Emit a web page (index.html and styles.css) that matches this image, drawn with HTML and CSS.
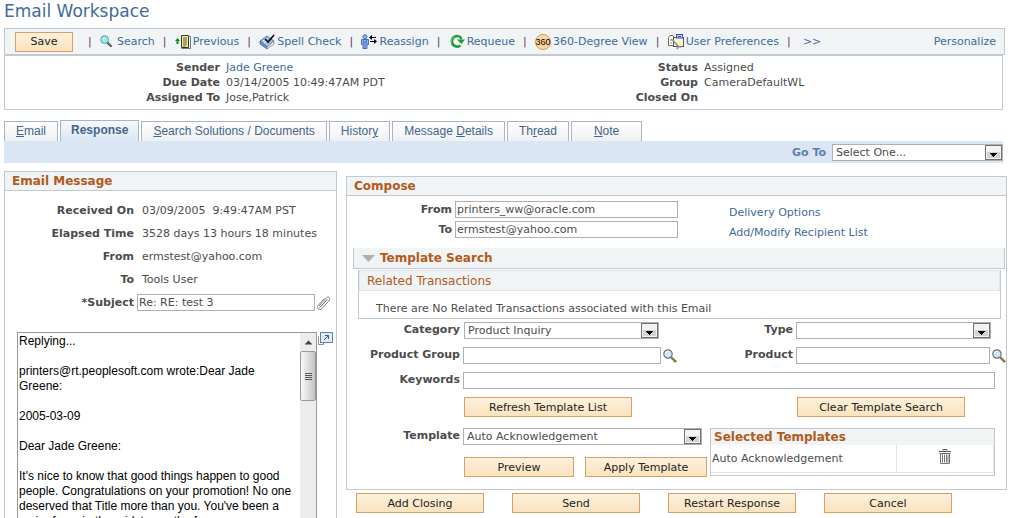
FILE: index.html
```html
<!DOCTYPE html>
<html lang="en">
<head>
<meta charset="utf-8">
<title>Email Workspace</title>
<link rel="stylesheet" href="styles.css">
</head>
<body>
<svg class="defs" aria-hidden="true">
  <symbol id="lens" viewBox="0 0 14 14">
    <path d="M8 8l5 5" stroke="#6b6a1c" stroke-width="2.4"/>
    <path d="M8.500 8l4 4" stroke="#b9b45a" stroke-width=".8"/>
    <circle cx="5" cy="5" r="4.200" fill="#cfe6fb" stroke="#6d7480" stroke-width="1.200"/>
    <path d="M2.500 5a2.500 2.500 0 0 1 2.500-2.500" stroke="#fff" stroke-width="1.200" fill="none"/>
  </symbol>
  <symbol id="drop" viewBox="0 0 17 16">
    <rect x=".5" y=".5" width="16" height="14" fill="#f3f3f3" stroke="#707070"/>
    <rect x="2" y="7" width="13" height="6" fill="#d2d2d2"/>
    <path d="M5 8h7v1h-1v1h-1v1h-1v1h-1v-1h-1v-1h-1v-1h-1z" fill="#000"/>
  </symbol>
</svg>
<div class="page">
  <h1 class="title">Email Workspace</h1>

  <nav class="toolbar">
    <button class="btn save">Save</button>
    <span class="sep">|</span>
    <a class="tool search" href="#"><svg class="icon-s" viewBox="0 0 14 14"><path d="M8 8l4.500 4.500" stroke="#333" stroke-width="2.200"/><path d="M8.500 8l4 4" stroke="#b9c85a" stroke-width=".8"/><circle cx="5" cy="5" r="4.200" fill="#8ff0f4" stroke="#6b8a92"/><path d="M3 5a2 2 0 0 1 2-2" stroke="#fff" fill="none"/></svg>Search</a>
    <span class="sep">|</span>
    <a class="tool" href="#"><svg class="icon" viewBox="0 0 16 16"><path d="M2.500 4l2.500 3H3.500v3h-2V7H0z" fill="#138a1e"/><path d="M6.500 1.500h7v12h-7z" fill="#f6f08a" stroke="#333"/><path d="M13.500 2.500h2v12h-9" fill="none" stroke="#777"/><path d="M8 4h4M8 6h4M8 8h4M8 10h4M8 12h3" stroke="#555"/></svg>Previous</a>
    <span class="sep">|</span>
    <a class="tool" href="#"><svg class="icon" viewBox="0 0 16 16"><path d="M1 7l7-5 7 5-7 6z" fill="#9dbce6" stroke="#3c5f92" stroke-width=".8"/><path d="M1 7v3l7 5v-2z" fill="#6f95cc" stroke="#3c5f92" stroke-width=".7"/><path d="M8 13v2l7-5V7z" fill="#f4f4ef" stroke="#777" stroke-width=".7"/><path d="M4 7l3-2M5 9l3-2" stroke="#fff"/><path d="M6 5l3 3 6-7" fill="none" stroke="#000" stroke-width="1.600"/></svg>Spell Check</a>
    <span class="sep">|</span>
    <a class="tool" href="#"><svg class="icon" viewBox="0 0 16 16"><circle cx="4" cy="2.700" r="2" fill="#8cb4f2" stroke="#456fc0"/><path d="M.5 5.500h7v5h-1.500V14.500h-4V10.500H.5z" fill="#8cb4f2" stroke="#456fc0"/><path d="M4 7v7M2.500 6v4M5.500 6v4" stroke="#456fc0" stroke-width=".8"/><path d="M9 3.500h6M9 7.500h6" stroke="#000"/><path d="M8 3.500l3-2.500v5zM16 7.500l-3-2.500v5z" fill="#000"/></svg>Reassign</a>
    <span class="sep">|</span>
    <a class="tool" href="#"><svg class="icon" viewBox="0 0 16 16"><path d="M9.500 2.200A5.300 5.300 0 1 0 11.500 11.500" fill="none" stroke="#1d9a32" stroke-width="2.600"/><path d="M9.500 2.200A5.300 5.300 0 0 1 12.500 5" fill="none" stroke="#1d9a32" stroke-width="2.400"/><path d="M8 5.500h8l-3.500 4.500z" fill="#1d9a32"/><path d="M2.500 9.500a5 5 0 0 1 3-6.500" stroke="#78d486" fill="none"/></svg>Requeue</a>
    <span class="sep">|</span>
    <a class="tool" href="#"><svg class="icon" viewBox="0 0 16 16"><circle cx="8" cy="8" r="7.500" fill="#fbd6a0" stroke="#dc9a4c"/><text class="deg" x="8" y="11" text-anchor="middle">360</text></svg>360-Degree View</a>
    <span class="sep">|</span>
    <a class="tool" href="#"><svg class="icon" viewBox="0 0 16 16"><path d="M.5 3.500L2 1.500h3l1 2v8H.5z" fill="#fff" stroke="#666"/><path d="M2 6h2M2 9h2" stroke="#c08a2a"/><rect x="5.500" y="3.500" width="10" height="9" fill="#fdf3cc" stroke="#555"/><rect x="8.500" y=".5" width="6" height="3.500" fill="#c4ccf8" stroke="#3b4cc0"/><path d="M10 2.500h3" stroke="#3b4cc0"/><path d="M3 5l3 2.500 4.500 5M9 15l1.500-2.500 3 .5" fill="none" stroke="#909090" stroke-width="1.600"/></svg>User Preferences</a>
    <span class="sep">|</span>
    <a class="tool more" href="#">&gt;&gt;</a>
    <a class="tool personalize" href="#">Personalize</a>
  </nav>

  <dl class="info">
    <dt>Sender</dt><dd><a href="#">Jade Greene</a></dd>
    <dt>Status</dt><dd>Assigned</dd>
    <dt>Due Date</dt><dd>03/14/2005 10:49:47AM PDT</dd>
    <dt>Group</dt><dd>CameraDefaultWL</dd>
    <dt>Assigned To</dt><dd>Jose,Patrick</dd>
    <dt>Closed On</dt><dd></dd>
  </dl>

  <nav class="tabs">
    <a class="tab" href="#"><u>E</u>mail</a>
    <a class="tab active" href="#">Response</a>
    <a class="tab" href="#"><u>S</u>earch Solutions / Documents</a>
    <a class="tab" href="#">Histor<u>y</u></a>
    <a class="tab" href="#">Message <u>D</u>etails</a>
    <a class="tab" href="#">Th<u>r</u>ead</a>
    <a class="tab wide" href="#"><u>N</u>ote</a>
  </nav>
  <div class="goto">
    <label for="goto">Go To</label>
    <div class="select goto-select"><select id="goto"><option>Select One...</option></select><svg class="drop"><use href="#drop"/></svg></div>
  </div>

  <main class="columns">
    <section class="panel message">
      <h2 class="head">Email Message</h2>
      <div class="details">
        <b>Received On</b><span class="value">03/09/2005&nbsp; 9:49:47AM PST</span>
        <b>Elapsed Time</b><span class="value">3528 days 13 hours 18 minutes</span>
        <b>From</b><span class="value">ermstest@yahoo.com</span>
        <b>To</b><span class="value">Tools User</span>
        <label for="subject">*Subject</label>
        <div class="lookup"><input id="subject" type="text" value="Re: RE: test 3"><svg class="clip" viewBox="0 0 14 16"><path d="M2 11L9.500 2.500a2 2 0 0 1 3 2.500L5 13.500a2.500 2.500 0 0 1-4-3L7.500 3.500M4 11.500l6.500-7.500M2.500 13l7-8" fill="none" stroke="#777" stroke-width=".9"/></svg></div>
      </div>
      <div class="editor">
        <div class="editbox">
          <textarea aria-label="Response text">Replying...

printers@rt.peoplesoft.com wrote:Dear Jade Greene:

2005-03-09

Dear Jade Greene:

It's nice to know that good things happen to good people. Congratulations on your promotion! No one deserved that Title more than you. You've been a major force in the midst over the for</textarea>
          <div class="bar" aria-hidden="true">
            <svg class="up" viewBox="0 0 16 17"><path d="M5 11h7v-1h-1V9h-1V8H9V7H8v1H7v1H6v1H5z" fill="#444"/></svg>
            <div class="thumb"><i></i><i></i><i></i><i></i></div>
          </div>
        </div>
        <svg class="pop" viewBox="0 0 15 14"><path d="M1 4.500h-.5v8h5v-1.500" fill="none" stroke="#7890a8"/><rect x="2.500" y=".5" width="12" height="10" fill="#dfeaf5" stroke="#6283a8"/><path d="M6 8l4-4M7 3.500h3.500V7" fill="none" stroke="#345a80"/></svg>
      </div>
    </section>

    <section class="right">
      <div class="panel">
        <h2 class="head">Compose</h2>
        <div class="address">
          <label for="from">From</label><input id="from" type="text" value="printers_ww@oracle.com"><a href="#">Delivery Options</a>
          <label for="to">To</label><input id="to" type="text" value="ermstest@yahoo.com"><a href="#">Add/Modify Recipient List</a>
        </div>
        <h3 class="subhead"><svg class="tri" viewBox="0 0 13 7"><path d="M0 0h13L6.500 7z" fill="#b0b0b0"/></svg>Template Search</h3>
        <div class="related">
          <h4>Related Transactions</h4>
          <p>There are No Related Transactions associated with this Email</p>
        </div>
        <div class="search-grid">
          <label for="cat">Category</label>
          <div class="select cat"><select id="cat"><option>Product Inquiry</option></select><svg class="drop"><use href="#drop"/></svg></div>
          <label for="type">Type</label>
          <div class="select type"><select id="type"><option></option></select><svg class="drop"><use href="#drop"/></svg></div>
          <label for="group">Product Group</label>
          <div class="lookup"><input id="group" type="text"><svg class="lens"><use href="#lens"/></svg></div>
          <label for="product">Product</label>
          <div class="lookup"><input id="product" type="text"><svg class="lens"><use href="#lens"/></svg></div>
          <label for="keys">Keywords</label>
          <input class="keys" id="keys" type="text">
          <button class="btn refresh">Refresh Template List</button>
          <button class="btn clear">Clear Template Search</button>
        </div>
        <div class="template">
          <label for="tpl">Template</label>
          <div class="choose">
            <div class="select"><select id="tpl"><option>Auto Acknowledgement</option></select><svg class="drop"><use href="#drop"/></svg></div>
            <div class="actions"><button class="btn preview">Preview</button><button class="btn apply">Apply Template</button></div>
          </div>
          <div class="picked">
            <table>
              <thead><tr><th colspan="2">Selected Templates</th></tr></thead>
              <tbody><tr><td>Auto Acknowledgement</td><td class="trash"><button aria-label="Delete"><svg viewBox="0 0 12 15"><path d="M4 1.500V.5h4v1M0 2.500h12" fill="none" stroke="#555"/><path d="M.5 4.500h11" stroke="#666"/><path d="M1.500 5v9.500h9V5M3.500 5.500v8M5.500 5.500v8M7.500 5.500v8M9 5.500v8" fill="none" stroke="#777"/></svg></button></td></tr></tbody>
            </table>
          </div>
        </div>
      </div>
      <div class="footer">
        <button class="btn">Add Closing</button>
        <button class="btn">Send</button>
        <button class="btn">Restart Response</button>
        <button class="btn">Cancel</button>
      </div>
    </section>
  </main>
</div>
</body>
</html>
```
FILE: styles.css
```css
* { box-sizing: border-box; }

body {
  margin: 0;
  height: 100vh;
  overflow: hidden;
  background: #fff;
  color: #4c4c4c;
  font: 11px/15px Verdana, "DejaVu Sans", sans-serif;
}

a { color: #426a9b; text-decoration: none; }
label, b, dt { font-weight: bold; }
h1, h2, h3, h4, p, dl, dd { margin: 0; }
.defs { display: none; }

.page { padding: 0 6px 0 4px; }
.title { color: #426a9b; font-size: 17px; font-weight: normal; line-height: 22px; padding-bottom: 6px; }

.btn {
  height: 20px;
  padding: 0;
  border: 1px solid #d9a066;
  border-radius: 0;
  background: linear-gradient(#fdf0dc, #fae3be);
  color: #222;
  font: inherit;
  white-space: nowrap;
}

.toolbar {
  display: flex;
  align-items: center;
  gap: 8px;
  height: 27px;
  margin-right: 2px;
  padding: 0 8px 0 10px;
  border: 1px solid #c4c8d0;
  background: #f0f4f5;
}
.save { width: 58px; margin-right: 7px; }
.sep { width: 4px; color: #6a3060; }
.tool { display: flex; align-items: center; gap: 2px; white-space: nowrap; }
.search { gap: 4px; }
.icon { width: 16px; height: 16px; }
.icon-s { width: 13px; height: 13px; }
.deg { font: 9px "Liberation Sans", sans-serif; fill: #000; }
.more { margin-left: 4px; }
.personalize { margin-left: auto; }

.info {
  display: grid;
  grid-template-columns: 215px 1fr 66px 298px;
  column-gap: 6px;
  margin-right: 4px;
  padding: 4px 0;
  border: 1px solid #c4c8d0;
}
.info dt { white-space: nowrap; justify-self: end; }
.info dd { min-height: 15px; }

.tabs { display: flex; align-items: flex-end; gap: 2px; margin-top: 10px; height: 21px; }
.tab {
  height: 20px;
  padding: 0 11px;
  border: 1px solid #a9b5c6;
  border-bottom: 0;
  background: linear-gradient(#fff, #eef0f2);
  color: #46648c;
  font: 12px/18px "Liberation Sans", Arial, sans-serif;
  white-space: nowrap;
}
.tab.active { height: 21px; padding: 0 10px; background: linear-gradient(#f6f9fd, #dae6f4); font-weight: bold; }
.tab.wide { padding: 0 22px; }
.goto {
  display: flex;
  align-items: center;
  justify-content: flex-end;
  gap: 6px;
  height: 22px;
  margin-right: 4px;
  background: #dae6f4;
  color: #5f7fa8;
}
.goto-select { width: 171px; }

input, select {
  display: block;
  width: 100%;
  height: 17px;
  border: 1px solid #b0b0b0;
  border-radius: 0;
  background: #fff;
  color: #4c4c4c;
  font: inherit;
}
input { padding: 0 1px; }
select { appearance: none; padding: 0 20px 0 3px; }
.select { position: relative; height: 17px; }
.drop { position: absolute; top: 1px; right: 1px; width: 17px; height: 16px; pointer-events: none; }

.columns { display: flex; align-items: flex-start; gap: 9px; padding-top: 8px; }
.panel { border: 1px solid #c4c8d0; }
.message { flex: 0 0 333px; }
.right { flex: 1; min-width: 0; padding-top: 5px; }
.head {
  height: 19px;
  padding: 0 7px;
  border-bottom: 1px solid #c4c8d0;
  background: #f0f4f5;
  color: #b35a1a;
  font-size: 12px;
  line-height: 18px;
}

.details {
  display: grid;
  grid-template-columns: 129px 1fr;
  column-gap: 3px;
  padding: 8px 5px 0 0;
  line-height: 23px;
}
.details b, .details label { text-align: right; }
.value { padding-left: 5px; white-space: nowrap; }
.lookup { display: flex; align-items: center; gap: 2px; line-height: 15px; }
.lookup input { flex: 1; min-width: 0; }
.clip { width: 14px; height: 16px; }

.editor { display: flex; align-items: flex-start; gap: 1px; padding: 18px 3px 0 12px; }
.editbox { display: flex; flex: 1; border: 1px solid #999; }
textarea {
  flex: 1;
  min-width: 0;
  height: 240px;
  padding: 1px 0 0 1px;
  border: 0;
  resize: none;
  overflow: hidden;
  color: #000;
  font: 12px/15px "Liberation Sans", Arial, sans-serif;
}
.bar { width: 16px; background: #ededed; }
.up { display: block; width: 16px; height: 18px; }
.thumb {
  display: grid;
  align-content: center;
  justify-content: center;
  gap: 1px;
  height: 50px;
  border: 1px solid #979797;
  border-radius: 2px;
  background: linear-gradient(90deg, #f8f8f8, #c4c4c8);
}
.thumb i { width: 7px; height: 1px; background: #555; }
.pop { width: 15px; height: 14px; }

.address {
  display: grid;
  grid-template-columns: 105px 223px 1fr;
  align-items: center;
  grid-auto-rows: 20px;
  column-gap: 3px;
  padding-top: 3px;
}
.address label, .search-grid label, .template label { text-align: right; white-space: nowrap; }
.address a { padding: 7px 0 0 48px; }

.subhead {
  display: flex;
  align-items: center;
  gap: 5px;
  height: 21px;
  margin: 9px 1px 0 6px;
  padding-left: 8px;
  border: 1px solid #c4c8d0;
  border-top: 0;
  background: #f0f4f5;
  color: #b35a1a;
  font-size: 12px;
}
.tri { width: 13px; height: 7px; }
.related { margin: 1px 5px 0 11px; border: 1px solid #c4c8d0; border-top: 0; }
.related h4 {
  height: 21px;
  padding-left: 7px;
  border: 1px solid #e0e4e8;
  background: #f0f4f5;
  color: #b35a1a;
  font-size: 12px;
  font-weight: normal;
  line-height: 20px;
}
.related p { padding: 10px 17px 2px; }

.search-grid {
  display: grid;
  grid-template-columns: 113px minmax(0, 214fr) 113px minmax(0, 210fr);
  gap: 8px 3px;
  padding-top: 3px;
}
.cat { margin: 0 18px 0 1px; }
.type { margin-right: 15px; }
.search-grid .lookup { height: 17px; }
.lens { width: 14px; height: 14px; flex: none; }
.keys { grid-column: 2 / 5; width: auto; margin-right: 11px; }
.refresh { grid-column: 2; width: 168px; margin-left: 1px; }
.clear { grid-column: 4; width: 168px; margin-left: 1px; }

.template {
  display: grid;
  grid-template-columns: 113px minmax(0, 1fr) 285px;
  gap: 3px;
  padding: 11px 11px 12px 0;
}
.choose .select { margin-right: 5px; }
.actions { display: flex; justify-content: space-between; margin: 12px 0 0 1px; }
.preview { width: 110px; }
.apply { width: 122px; }
.picked { height: 48px; border: 1px solid #c4c8d0; }
table { width: 100%; border-collapse: collapse; }
th, td { padding: 0 1px; text-align: left; }
th { height: 16px; padding-left: 3px; background: #f0f4f5; color: #b35a1a; font-size: 12px; }
td { height: 27px; border-bottom: 1px solid #dfe3e6; }
.trash { width: 97px; border-left: 1px solid #dfe3e6; border-right: 1px solid #dfe3e6; text-align: center; }
.trash button { padding: 0; border: 0; background: none; }
.trash svg { display: block; width: 12px; height: 15px; }

.footer { display: flex; gap: 28px; padding: 3px 0 0 10px; }
.footer .btn { width: 128px; }
```
